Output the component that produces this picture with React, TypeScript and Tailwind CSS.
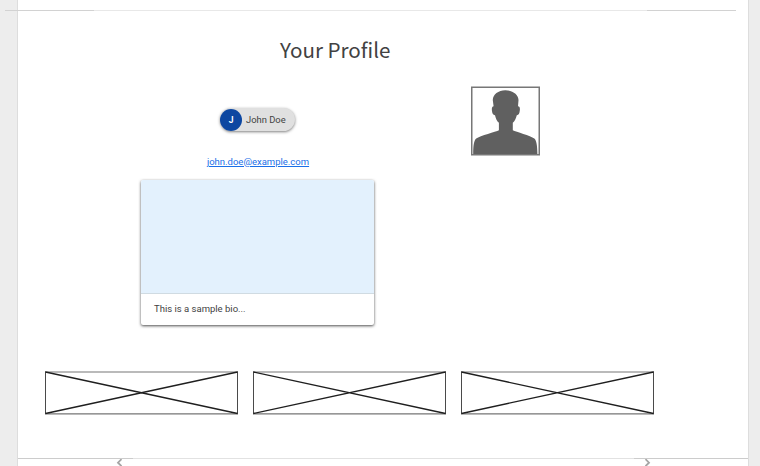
function Placeholder() {
  return (
    <svg width="194" height="44" viewBox="0 0 194 44" fill="none">
      <path d="M1 1H194M1 42.8H194" stroke="#767676" strokeWidth="1.2" />
      <path d="M1.5 .5V43M193.5 .5V43" stroke="#4a4a4a" strokeWidth="1" />
      <path d="M1.5 1L193.5 42.5M1.5 42.5L193.5 1" stroke="#1f1f1f" strokeWidth="1.3" />
    </svg>
  );
}

function Avatar() {
  return (
    <svg width="69" height="70" viewBox="0 0 69 70">
      <rect x=".75" y="1.25" width="67.5" height="67.5" fill="#fff" stroke="#777777" strokeWidth="1.5" />
      <path
        fill="#606060"
        d="M34.3 4.2C41.5 4.2 47.6 8.6 47.5 14.2L47 20.3C48.8 20.3 49.1 22.3 48.8 24.5C48.5 27.4 47.6 29.3 45.8 29.2C45 32.5 43.6 35.2 41.8 36.8V44.2C45 46 59.5 49.4 63.3 52.6C65.5 54.5 66.3 59.5 66.4 68H2.2C2.2 59.5 3 54.5 5.2 52.6C9 49.4 25 46 27.9 44.2V36.8C26 35.2 24.7 32.5 24 29.2C22.2 29.3 21.2 27.4 20.9 24.5C20.7 22.3 21 20.3 22.6 20.3L21.8 14.2C21.7 8.6 27.3 4.2 34.3 4.2Z"
      />
    </svg>
  );
}

export default function App() {
  return (
    <div className="h-[466px] w-[760px] overflow-hidden bg-[#ededed] font-['Roboto',sans-serif]">
      <main className="ml-[17px] flex h-[466px] w-[732px] flex-col border-x border-[#dddddd] bg-white">
        <div className="-ml-[13px] mt-[10px] flex h-px w-[731px] shrink-0">
          <span className="w-[89px] bg-[#d2d2d2]" />
          <span className="flex-1 bg-[#e8e8e8]" />
          <span className="w-[89px] bg-[#d2d2d2]" />
        </div>

        <h1 className="ml-[262px] mt-[23px] h-[30px] shrink-0 whitespace-nowrap font-['Noto_Sans_CJK_SC',sans-serif] text-[20.6px] leading-[30px] text-[#424242]">
          Your Profile
        </h1>

        <section className="mt-[22px] flex h-[286px] shrink-0">
          <div className="ml-[123px] flex w-[233px] flex-col items-center">
            <div className="mt-[22px] flex h-[23px] w-[75px] items-center rounded-full bg-[#e0e0e0] text-[9.4px] text-[#424242] shadow-[0_1px_3px_rgba(0,0,0,0.5)]">
              <span className="flex size-[22px] shrink-0 items-center justify-center rounded-full bg-[#0d47a1] pt-px text-[8.5px] font-bold text-white">
                J
              </span>
              <span className="ml-[4px] whitespace-nowrap pt-px">John Doe</span>
            </div>
            <a className="ml-px mt-[24px] h-[14px] text-[9.5px] leading-[14px] text-[#1a6fe8] underline" href="#email">
              john.doe@example.com
            </a>
            <article className="mt-[11px] h-[145px] w-[233px] shrink-0 overflow-hidden rounded-[2px] bg-white shadow-[0_1px_3px_rgba(0,0,0,0.7)]">
              <div className="h-[114px] border-b border-[#d0dbe2] bg-[#e3f1fd]" />
              <p className="pl-[13px] pt-[8px] text-[9.5px] leading-[14px] text-[#424242]">This is a sample bio...</p>
            </article>
          </div>
          <div className="ml-[97px]">
            <Avatar />
          </div>
        </section>

        <section className="ml-[26px] mt-[-1px] flex shrink-0 gap-[14px]">
          <Placeholder />
          <Placeholder />
          <Placeholder />
        </section>

        <footer className="mt-[43px] h-[8px] shrink-0">
          <div className="flex h-px">
            <span className="w-[115px] bg-[#cccccc]" />
            <span className="flex-1 bg-[#e2e2e2]" />
            <span className="w-[114px] bg-[#cccccc]" />
          </div>
          <div className="flex justify-between pl-[98px] pr-[97px]">
            <svg width="7" height="8" viewBox="0 0 7 8" fill="none" stroke="#a5a5a5" strokeWidth="1.8">
              <path d="M5.5 .2L2 3.7L5.5 7.2" />
            </svg>
            <svg width="7" height="8" viewBox="0 0 7 8" fill="none" stroke="#a5a5a5" strokeWidth="1.8">
              <path d="M1.5 .2L5 3.7L1.5 7.2" />
            </svg>
          </div>
        </footer>
      </main>
    </div>
  );
}
